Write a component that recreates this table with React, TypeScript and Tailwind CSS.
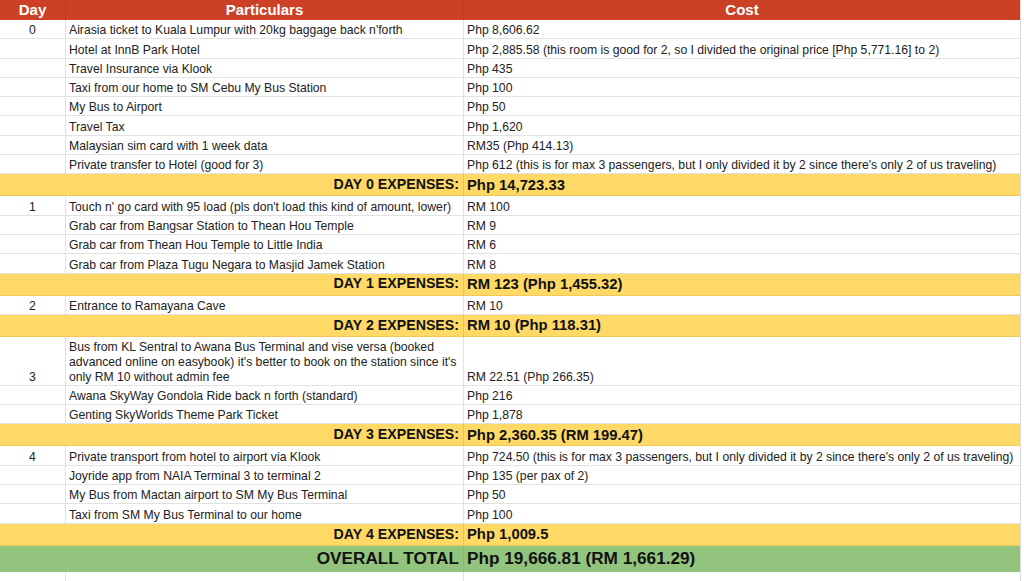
type Item = { particulars: string[]; cost: string };
type Section = { day: string; items: Item[]; label: string; total: string };

const sections: Section[] = [
  {
    day: "0",
    items: [
      { particulars: ["Airasia ticket to Kuala Lumpur with 20kg baggage back n'forth"], cost: "Php 8,606.62" },
      { particulars: ["Hotel at InnB Park Hotel"], cost: "Php 2,885.58 (this room is good for 2, so I divided the original price [Php 5,771.16] to 2)" },
      { particulars: ["Travel Insurance via Klook"], cost: "Php 435" },
      { particulars: ["Taxi from our home to SM Cebu My Bus Station"], cost: "Php 100" },
      { particulars: ["My Bus to Airport"], cost: "Php 50" },
      { particulars: ["Travel Tax"], cost: "Php 1,620" },
      { particulars: ["Malaysian sim card with 1 week data"], cost: "RM35 (Php 414.13)" },
      { particulars: ["Private transfer to Hotel (good for 3)"], cost: "Php 612 (this is for max 3 passengers, but I only divided it by 2 since there's only 2 of us traveling)" },
    ],
    label: "DAY 0 EXPENSES:",
    total: "Php 14,723.33",
  },
  {
    day: "1",
    items: [
      { particulars: ["Touch n' go card with 95 load (pls don't load this kind of amount, lower)"], cost: "RM 100" },
      { particulars: ["Grab car from Bangsar Station to Thean Hou Temple"], cost: "RM 9" },
      { particulars: ["Grab car from Thean Hou Temple to Little India"], cost: "RM 6" },
      { particulars: ["Grab car from Plaza Tugu Negara to Masjid Jamek Station"], cost: "RM 8" },
    ],
    label: "DAY 1 EXPENSES:",
    total: "RM 123 (Php 1,455.32)",
  },
  {
    day: "2",
    items: [{ particulars: ["Entrance to Ramayana Cave"], cost: "RM 10" }],
    label: "DAY 2 EXPENSES:",
    total: "RM 10 (Php 118.31)",
  },
  {
    day: "3",
    items: [
      {
        particulars: [
          "Bus from KL Sentral to Awana Bus Terminal and vise versa (booked",
          "advanced online on easybook) it's better to book on the station since it's",
          "only RM 10 without admin fee",
        ],
        cost: "RM 22.51 (Php 266.35)",
      },
      { particulars: ["Awana SkyWay Gondola Ride back n forth (standard)"], cost: "Php 216" },
      { particulars: ["Genting SkyWorlds Theme Park Ticket"], cost: "Php 1,878" },
    ],
    label: "DAY 3 EXPENSES:",
    total: "Php 2,360.35 (RM 199.47)",
  },
  {
    day: "4",
    items: [
      { particulars: ["Private transport from hotel to airport via Klook"], cost: "Php 724.50 (this is for max 3 passengers, but I only divided it by 2 since there's only 2 of us traveling)" },
      { particulars: ["Joyride app from NAIA Terminal 3 to terminal 2"], cost: "Php 135 (per pax of 2)" },
      { particulars: ["My Bus from Mactan airport to SM My Bus Terminal"], cost: "Php 50" },
      { particulars: ["Taxi from SM My Bus Terminal to our home"], cost: "Php 100" },
    ],
    label: "DAY 4 EXPENSES:",
    total: "Php 1,009.5",
  },
];

export default function App() {
  return (
    <div
      className="h-[581px] w-[1024px] overflow-hidden bg-white text-[12.2px] text-[#222]"
      style={{ fontFamily: '"Liberation Sans", Arial, sans-serif' }}
    >
      <div className="w-[1021px] border-r border-[#d9d9d9]">
        {/* header */}
        <div className="flex h-[20px] bg-[#cc4125] text-[15px] font-bold leading-[20px] text-white">
          <div className="w-[66px] border-r border-[#c0392b] text-center">Day</div>
          <div className="w-[398px] border-r border-[#c0392b] text-center">Particulars</div>
          <div className="flex-1 text-center">Cost</div>
        </div>

        {sections.map((s) => (
          <div key={s.day}>
            {s.items.map((item, i) => (
              <div
                key={i}
                className={[
                  "flex border-b border-[#e2e2e2] leading-[15px]",
                  item.particulars.length > 1 ? "h-[49px]" : "h-[19.3px]",
                ].join(" ")}
              >
                <div className="flex w-[66px] items-end justify-center border-r border-[#e2e2e2] pb-0">
                  {i === 0 ? s.day : ""}
                </div>
                <div className="flex w-[398px] flex-col justify-end border-r border-[#e2e2e2] pb-0 pl-[3px] whitespace-nowrap">
                  {item.particulars.map((line) => (
                    <span key={line}>{line}</span>
                  ))}
                </div>
                <div className="flex flex-1 items-end pb-0 pl-[3px] whitespace-nowrap">{item.cost}</div>
              </div>
            ))}
            <div className="flex h-[22px] border-b border-[#f1c75a] bg-[#ffd966] font-bold text-[#111]">
              <div className="flex w-[464px] items-center justify-end border-r border-[#e8c35a] pr-[4px] text-[14.2px]">
                {s.label}
              </div>
              <div className="flex flex-1 items-center pl-[3px] text-[14.8px]">{s.total}</div>
            </div>
          </div>
        ))}

        {/* overall */}
        <div className="flex h-[26px] bg-[#93c47d] font-bold text-[#111]">
          <div className="flex w-[464px] items-center justify-end border-r border-[#86b86f] pr-[4px] text-[17.2px]">
            OVERALL TOTAL
          </div>
          <div className="flex flex-1 items-center pl-[3px] text-[17.2px]">Php 19,666.81 (RM 1,661.29)</div>
        </div>

        <div className="flex h-[12px]">
          <div className="w-[66px] border-r border-[#e2e2e2]" />
          <div className="w-[398px] border-r border-[#e2e2e2]" />
          <div className="flex-1" />
        </div>
      </div>
    </div>
  );
}
